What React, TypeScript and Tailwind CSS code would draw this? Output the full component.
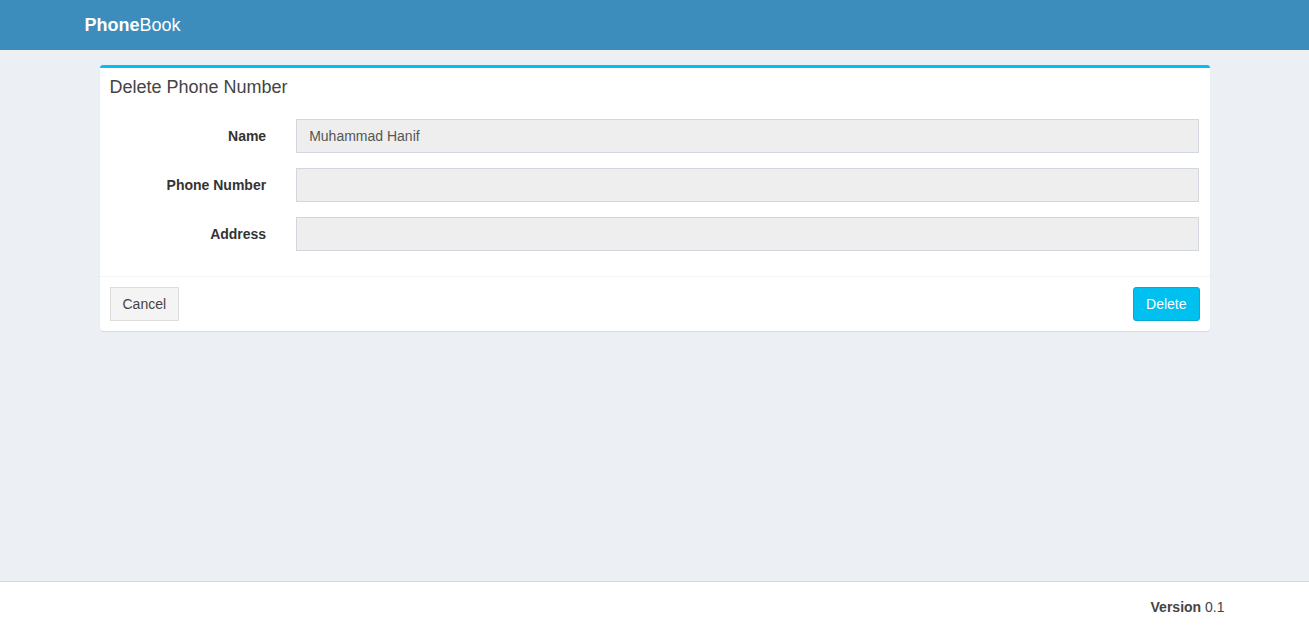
export default function App() {
  const rows = [
    { label: "Name", value: "Muhammad Hanif" },
    { label: "Phone Number", value: "" },
    { label: "Address", value: "" },
  ];
  return (
    <div className="flex min-h-[632px] h-screen flex-col bg-[#ecf0f5] text-[14px] text-[#333] [font-family:'Liberation_Sans',Arial,sans-serif]">
      <header className="h-[50px] shrink-0 bg-[#3c8dbc]">
        <div className="mx-auto w-[1170px] px-[15px]">
          <div className="flex h-[50px] items-center text-[18px] leading-[20px] text-white">
            <span className="font-bold">Phone</span>
            <span>Book</span>
          </div>
        </div>
      </header>
      <main className="flex-1">
        <div className="mx-auto w-[1170px] px-[15px]">
          <div className="p-[15px]">
            <div className="rounded-[3px] border-t-[3px] border-[#00c0ef] bg-white shadow-[0_1px_1px_rgba(0,0,0,0.1)]">
              <div className="px-[10px] pt-[9px] pb-[12px]">
                <h3 className="text-[18px] leading-[20px] text-[#444]">Delete Phone Number</h3>
              </div>
              <div className="p-[10px] pb-[25px]">
                <div className="-mx-[15px] flex flex-col gap-[15px]">
                  {rows.map((r) => (
                    <div key={r.label} className="flex">
                      <label className="w-[16.6667%] px-[15px] pt-[7px] text-right font-bold leading-[20px]">
                        {r.label}
                      </label>
                      <div className="w-[83.3333%] px-[15px]">
                        <div className="h-[34px] border border-[#d2d6de] bg-[#eee] px-[12px] py-[6px] leading-[20px] text-[#555]">
                          {r.value}
                        </div>
                      </div>
                    </div>
                  ))}
                </div>
              </div>
              <div className="flex justify-between border-t border-[#f4f4f4] p-[10px]">
                <button className="h-[34px] border border-[#ddd] bg-[#f4f4f4] px-[12px] leading-[20px] text-[#444]">
                  Cancel
                </button>
                <button className="h-[34px] rounded-[3px] border border-[#00acd6] bg-[#00c0ef] px-[12px] leading-[20px] text-white">
                  Delete
                </button>
              </div>
            </div>
          </div>
        </div>
      </main>
      <footer className="h-[51px] shrink-0 border-t border-[#d2d6de] bg-white">
        <div className="mx-auto w-[1170px] px-[15px] py-[15px] text-right leading-[20px] text-[#444]">
          <span className="font-bold">Version</span> 0.1
        </div>
      </footer>
    </div>
  );
}
